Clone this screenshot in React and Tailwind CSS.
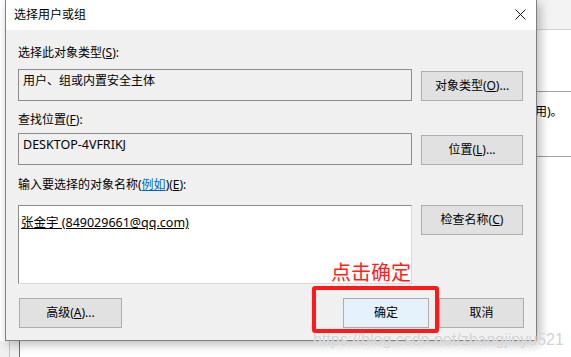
import React from "react";

const FONT = "font-['Noto_Sans','Noto_Sans_CJK_SC',sans-serif]";

const Key = ({ children }) => <span className="underline">{children}</span>;

const Btn = ({ children, className = "" }) => (
  <div
    className={`flex h-[30px] items-center justify-center border border-[#adadad] bg-[#e1e1e1] text-[12px] text-black ${className}`}
  >
    {children}
  </div>
);

const BackWindow = () => (
  <div className="absolute inset-0 bg-white">
    <div className="absolute left-[537px] right-0 top-0 h-[30px] border-b border-[#d4d4d4] bg-[#f3f3f3]" />
    <div className="absolute left-[480px] right-0 top-[91px] h-[66px] border-y border-[#a0a0a0] bg-white">
      <div className="pl-[55px] pt-[12px] text-[12px] leading-4 text-black">用)。</div>
    </div>
    <div className="absolute bottom-0 left-0 right-0 top-[341px] bg-[#f0f0f0]">
      <div className="ml-[9px] h-full border-l border-[#c4c4c4] pl-[9px]">
        <div className="h-full border-l border-[#6e6e6e] bg-white" />
      </div>
    </div>
  </div>
);

export default function App() {
  return (
    <div className={`relative h-[357px] w-[571px] overflow-hidden bg-white ${FONT}`}>
      <BackWindow />

      <div className="absolute left-[5px] top-0 flex h-[341px] w-[532px] flex-col border-x border-b border-[#7f7f7f] bg-[#f0f0f0] shadow-[3px_3px_10px_rgba(0,0,0,0.28)]">
        <div className="flex h-[30px] items-center justify-between bg-white pl-[8px] pr-[10px]">
          <span className="text-[12px] leading-4 text-black">选择用户或组</span>
          <svg width="11" height="11" viewBox="0 0 11 11" className="mb-[2px]">
            <path d="M0.5 0.5 L10.5 10.5 M10.5 0.5 L0.5 10.5" stroke="#111" strokeWidth="1" />
          </svg>
        </div>

        <div className="flex flex-1 flex-col px-[12px] text-[12px] text-black">
          <div className="mt-[15px] h-4 leading-4">
            选择此对象类型(<Key>S</Key>):
          </div>
          <div className="mt-[8px] flex items-start gap-[9px]">
            <div className="h-[32px] w-[394px] border border-[#8c8c8c] bg-[#f0f0f0] pl-[4px] pt-[3px] leading-4">
              用户、组或内置安全主体
            </div>
            <Btn className="mt-[2px] w-[102px]">
              对象类型(<Key>O</Key>)...
            </Btn>
          </div>

          <div className="mt-[11px] h-4 leading-4">
            查找位置(<Key>F</Key>):
          </div>
          <div className="mt-[5px] flex items-start gap-[9px]">
            <div className="h-[32px] w-[394px] border border-[#8c8c8c] bg-[#f0f0f0] pl-[4px] pt-[3px] text-[12.5px] leading-4">
              DESKTOP-4VFRIKJ
            </div>
            <Btn className="mt-[2px] w-[102px]">
              位置(<Key>L</Key>)...
            </Btn>
          </div>

          <div className="mt-[12px] h-4 leading-4">
            输入要选择的对象名称(<span className="text-[#0066cc] underline">例如</span>)(<Key>E</Key>):
          </div>
          <div className="mt-[12px] flex items-start gap-[9px]">
            <div className="h-[79px] w-[394px] border border-[#8c8c8c] border-b-[#d9d9d9] border-r-[#d9d9d9] bg-white pl-[2px] pt-[9px] text-[12.5px] leading-4">
              <span className="underline">张金宇 (849029661@qq.com)</span>
            </div>
            <Btn className="w-[102px]">
              检查名称(<Key>C</Key>)
            </Btn>
          </div>

          <div className="mt-[14px] flex items-center">
            <Btn className="ml-[1px] w-[103px]">
              高级(<Key>A</Key>)...
            </Btn>
            <div className="flex-1" />
            <Btn className="w-[86px] border-[#0078d7] bg-[#e5f1fb]">确定</Btn>
            <Btn className="ml-[10px] w-[85px]">取消</Btn>
          </div>
        </div>
      </div>

      <div className="absolute left-[331px] top-[261px] text-[20px] leading-[24px] text-[#ff2020]">
        点击确定
      </div>
      <div className="absolute left-[312px] top-[286px] h-[47px] w-[127px] rounded-[3px] border-[4px] border-[#ff1a1a]" />
      <div className="absolute left-[313px] top-[330px] font-['Liberation_Sans',sans-serif] text-[16px] leading-[20px] text-[#d2d2d2] [text-shadow:0_0_1px_#ffffff]">
        https://blog.csdn.net/zhangjinyu521
      </div>
    </div>
  );
}
